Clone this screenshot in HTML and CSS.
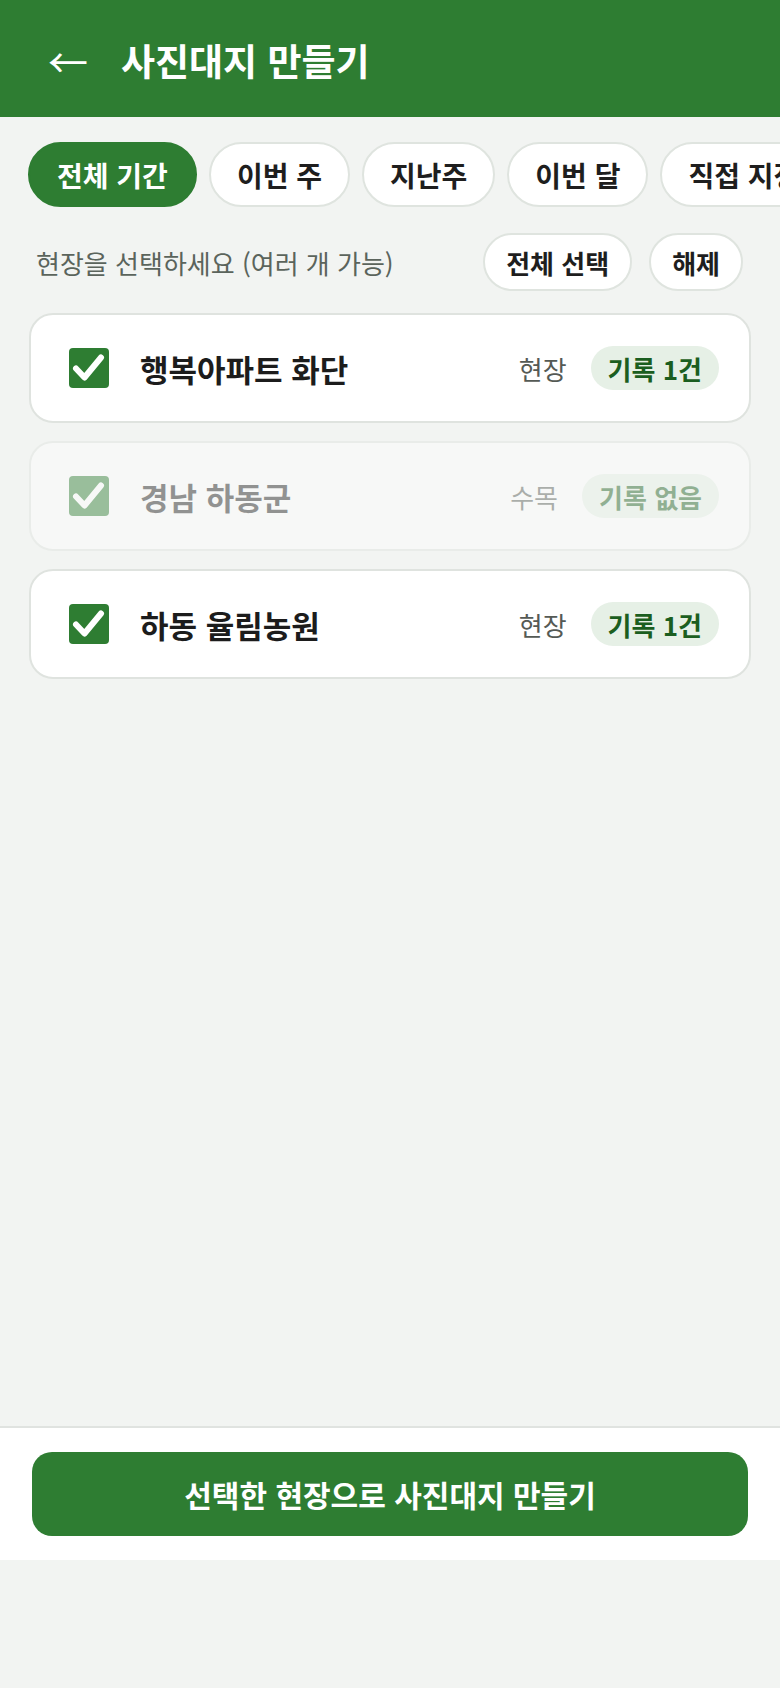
FILE: index.html
```html
<!DOCTYPE html>
<html lang="ko">
<head>
<meta charset="utf-8">
<title>사진대지 만들기</title>
<link rel="stylesheet" href="styles.css">
</head>
<body>
<div class="app">
  <header class="topbar">
    <button class="back" type="button" aria-label="뒤로">←</button>
    <h1 class="title">사진대지 만들기</h1>
  </header>

  <main class="content">
    <nav class="periods">
      <button class="chip chip-active" type="button">전체 기간</button>
      <button class="chip" type="button">이번 주</button>
      <button class="chip" type="button">지난주</button>
      <button class="chip" type="button">이번 달</button>
      <button class="chip" type="button">직접 지정</button>
    </nav>

    <div class="pick-row">
      <p class="pick-hint">현장을 선택하세요 (여러 개 가능)</p>
      <div class="pick-actions">
        <button class="pill" type="button">전체 선택</button>
        <button class="pill" type="button">해제</button>
      </div>
    </div>

    <ul class="sites">
      <li class="site">
        <span class="check">
          <svg viewBox="0 0 40 40" width="40" height="40"><path d="M7 20.5 L15.5 29.5 L32 9.5" fill="none" stroke="#fff" stroke-width="6" stroke-linecap="round" stroke-linejoin="round"/></svg>
        </span>
        <span class="site-name">행복아파트 화단</span>
        <span class="site-type">현장</span>
        <span class="badge">기록 1건</span>
      </li>
      <li class="site site-empty">
        <span class="check">
          <svg viewBox="0 0 40 40" width="40" height="40"><path d="M7 20.5 L15.5 29.5 L32 9.5" fill="none" stroke="#fff" stroke-width="6" stroke-linecap="round" stroke-linejoin="round"/></svg>
        </span>
        <span class="site-name">경남 하동군</span>
        <span class="site-type">수목</span>
        <span class="badge">기록 없음</span>
      </li>
      <li class="site">
        <span class="check">
          <svg viewBox="0 0 40 40" width="40" height="40"><path d="M7 20.5 L15.5 29.5 L32 9.5" fill="none" stroke="#fff" stroke-width="6" stroke-linecap="round" stroke-linejoin="round"/></svg>
        </span>
        <span class="site-name">하동 율림농원</span>
        <span class="site-type">현장</span>
        <span class="badge">기록 1건</span>
      </li>
    </ul>
  </main>

  <footer class="bottom">
    <button class="make" type="button">선택한 현장으로 사진대지 만들기</button>
  </footer>
</div>
</body>
</html>
```

FILE: styles.css
```css
* {
  box-sizing: border-box;
}

body {
  margin: 0;
  background: #f2f4f2;
  font-family: "Noto Sans CJK KR", "Noto Sans", sans-serif;
  color: #1c1c1c;
}

button {
  font-family: inherit;
  cursor: pointer;
}

.app {
  min-height: 1560px;
  display: flex;
  flex-direction: column;
}

/* top bar */
.topbar {
  height: 117px;
  background: #2e7d32;
  display: flex;
  align-items: center;
  padding: 0 0 0 40px;
  gap: 25px;
}

.back {
  background: none;
  border: 0;
  color: #fff;
  font-size: 40px;
  line-height: 1;
  padding: 4px 0 0;
  width: 56px;
  text-align: center;
}

.title {
  margin: 0;
  color: #fff;
  font-size: 37px;
  font-weight: 700;
  line-height: 1.2;
  padding-top: 4px;
}

.content {
  flex: 1;
}

/* period filter */
.periods {
  display: flex;
  gap: 12px;
  padding: 25px 28px 0;
  overflow-x: auto;
  scrollbar-width: none;
}

.chip {
  flex: none;
  height: 65px;
  padding: 0 26px;
  border: 2px solid #dfe4df;
  border-radius: 33px;
  background: #fff;
  color: #1e1e1e;
  font-size: 28px;
  font-weight: 700;
  white-space: nowrap;
}

.chip-active {
  padding: 0 27px;
  background: #2e7d32;
  border-color: #2e7d32;
  color: #fff;
}

/* selection row */
.pick-row {
  display: flex;
  align-items: center;
  justify-content: space-between;
  margin-top: 26px;
  padding: 0 37px 0 36px;
}

.pick-hint {
  margin: 0;
  font-size: 26px;
  color: #5b645c;
}

.pick-actions {
  display: flex;
  gap: 17px;
}

.pill {
  height: 58px;
  padding: 0 21px;
  border: 2px solid #dfe4df;
  border-radius: 29px;
  background: #fff;
  color: #1e1e1e;
  font-size: 26px;
  font-weight: 700;
}

/* site list */
.sites {
  list-style: none;
  margin: 22px 0 0;
  padding: 0 29px;
  display: flex;
  flex-direction: column;
  gap: 18px;
}

.site {
  height: 110px;
  display: flex;
  align-items: center;
  padding: 0 30px;
  background: #fff;
  border: 2px solid #dfe3df;
  border-radius: 24px;
}

.site-empty {
  opacity: 0.45;
}

.check {
  flex: none;
  width: 40px;
  height: 40px;
  margin-left: 8px;
  border-radius: 4px;
  background: #2e7d32;
  display: flex;
}

.site-name {
  flex: 1;
  margin-left: 31px;
  font-size: 31px;
  font-weight: 700;
  color: #1c1c1c;
}

.site-type {
  font-size: 26px;
  color: #555a55;
}

.badge {
  margin-left: 24px;
  height: 44px;
  padding: 0 17px;
  border-radius: 22px;
  background: #e6f0e6;
  color: #1b5e20;
  font-size: 26px;
  font-weight: 700;
  display: flex;
  align-items: center;
}

/* footer action */
.bottom {
  background: #fff;
  border-top: 2px solid #e0e3e0;
  padding: 24px 32px;
}

.make {
  display: block;
  width: 100%;
  height: 84px;
  border: 0;
  border-radius: 20px;
  background: #2e7d32;
  color: #fff;
  font-size: 30px;
  font-weight: 700;
}
```
